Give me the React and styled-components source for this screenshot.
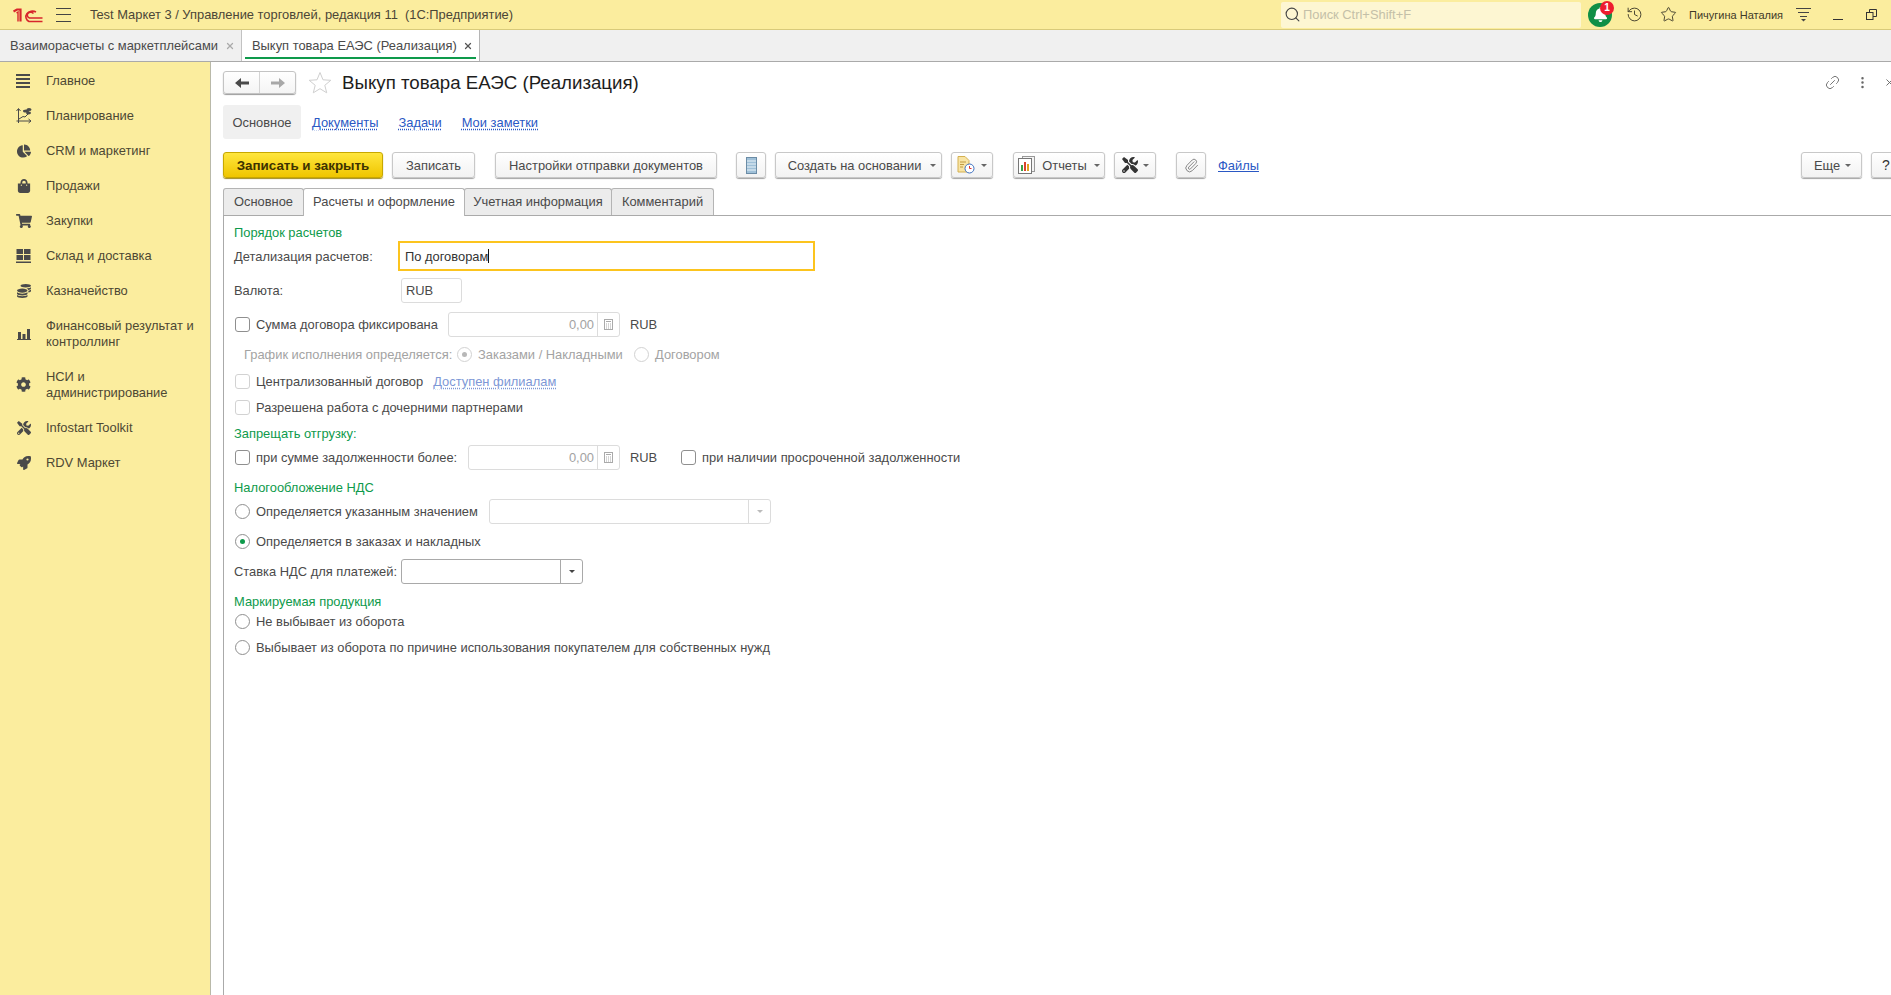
import React from "react";
import styled, { createGlobalStyle } from "styled-components";
import { Search, History, Star, Link2, Paperclip, X, MoreVertical } from "lucide-react";
import { FaChartPie, FaShoppingBag, FaShoppingCart, FaCog, FaTools, FaRocket, FaCoins, FaBell } from "react-icons/fa";

const Global = createGlobalStyle`
  html, body { margin: 0; padding: 0; height: 100%; overflow: hidden; background: #fff; }
  body { font-family: "Liberation Sans", Arial, sans-serif; font-size: 12.9px; color: #4a4a4a; }
  #root { height: 100%; }
`;

const Shell = styled.div`width:1891px;height:995px;display:flex;flex-direction:column;overflow:hidden;`;

/* ---- top bar ---- */
const TopBar = styled.header`height:29px;flex:none;display:flex;align-items:center;background:#fbed9e;border-bottom:1px solid #d8ca7a;`;
const LogoBox = styled.div`margin-left:13px;width:30px;height:16px;display:flex;`;
const Burger = styled.div`margin-left:13px;width:15px;height:12px;border-top:1px solid #444;border-bottom:1px solid #444;position:relative;
  &::after{content:"";position:absolute;left:0;right:0;top:5px;height:1px;background:#444;}`;
const AppTitle = styled.div`margin-left:19px;color:#4b4637;white-space:nowrap;`;
const SearchBox = styled.div`margin-left:auto;width:300px;height:26px;background:#fdf6d2;border-radius:2px;display:flex;align-items:center;padding-left:3px;box-sizing:border-box;color:#c4c0a8;gap:2px;`;
const BellWrap = styled.div`margin-left:7px;width:24px;height:24px;border-radius:50%;background:#0f8f46;display:flex;align-items:center;justify-content:center;position:relative;color:#fff;`;
const Badge = styled.span`position:absolute;top:-2px;right:-2px;width:14px;height:14px;border-radius:50%;background:#ee1c2e;color:#fff;font-size:10px;font-weight:700;display:flex;align-items:center;justify-content:center;`;
const TopIcon = styled.div`margin-left:${p=>p.$ml}px;display:flex;color:#4a4632;`;
const UserName = styled.div`margin-left:12px;width:93px;font-size:11px;color:#3f3a28;white-space:nowrap;`;
const FilterIcon = styled.div`margin-left:14px;display:flex;`;
const Minimize = styled.div`margin-left:22px;width:10px;height:1px;background:#333;align-self:flex-end;margin-bottom:9px;`;
const Restore = styled.div`margin-left:23px;margin-right:14px;display:flex;`;

/* ---- open window tabs ---- */
const WinTabs = styled.nav`height:31px;flex:none;display:flex;background:#f0f0f0;border-bottom:1px solid #aaa;`;
const WinTab = styled.div`
  display:flex;align-items:center;box-sizing:border-box;width:${p=>p.$w}px;height:31px;padding-left:10px;white-space:nowrap;
  background:${p=>p.$active?"#fff":"transparent"};color:#4a4a4a;position:relative;
  border-right:1px solid ${p=>p.$active?"#b5b5b5":"#c2c2c2"};
  ${p=>p.$active&&"&::after{content:'';position:absolute;left:3px;right:3px;bottom:2px;height:2px;background:#0e9a4b;}"}
`;
const WinClose = styled.span`position:absolute;right:${p=>p.$r}px;top:11px;display:flex;color:${p=>p.$dark?"#555":"#aaa"};background:inherit;`;

/* ---- body ---- */
const Body = styled.div`flex:1;display:flex;min-height:0;`;
const Side = styled.aside`width:210px;flex:none;background:#fbed9e;border-right:1px solid #b9b9a9;padding-top:1px;`;
const SideItem = styled.div`height:${p=>p.$two?51:35}px;display:flex;align-items:center;color:#4d4834;line-height:16px;`;
const SideIcon = styled.div`width:46px;flex:none;display:flex;justify-content:center;padding-left:1px;box-sizing:border-box;color:#4a4a4a;`;

const Content = styled.main`flex:1;min-width:0;overflow:hidden;`;
const Inner = styled.div`width:1690px;box-sizing:border-box;padding:9px 0 0 12px;height:100%;display:flex;flex-direction:column;`;

const Head = styled.div`height:23px;display:flex;align-items:center;flex:none;`;
const NavGroup = styled.div`display:flex;width:73px;height:23px;box-sizing:border-box;border:1px solid #c4c4c4;border-radius:3px;background:linear-gradient(#fff,#f4f4f4);box-shadow:0 1px 1px #9c9c9c;`;
const NavBtn = styled.div`flex:1;display:flex;align-items:center;justify-content:center;&+&{border-left:1px solid #d4d4d4;}`;
const StarBox = styled.div`margin-left:12px;display:flex;color:#c8c8c8;`;
const Title = styled.h1`margin:0 0 0 10px;font-size:18.7px;font-weight:400;color:#1d1d1d;white-space:nowrap;`;
const HeadActions = styled.div`margin-left:auto;display:flex;align-items:center;color:#666;margin-right:6px;gap:14px;`;

const SubTabs = styled.div`margin-top:11px;height:34px;flex:none;display:flex;align-items:center;`;
const SubActive = styled.div`width:78px;height:34px;background:#f0f0f0;border-radius:3px;display:flex;align-items:center;justify-content:center;`;
const SubLink = styled.a`margin-left:${p=>p.$ml}px;color:#2a58c4;text-decoration:underline dotted;text-underline-offset:2px;white-space:nowrap;`;

const Toolbar = styled.div`margin-top:13px;height:26px;flex:none;display:flex;align-items:flex-start;`;
const Btn = styled.div`
  height:26px;box-sizing:border-box;width:${p=>p.$w}px;margin-left:${p=>p.$ml||0}px;padding-left:${p=>p.$pl||0}px;flex:none;
  display:flex;align-items:center;justify-content:center;gap:${p=>p.$gap||0}px;white-space:nowrap;color:#4a4a4a;
  border:1px solid #c8c8c8;border-radius:3px;background:linear-gradient(#fff,#f2f2f2);box-shadow:0 1px 1px #a3a3a3;
`;
const PrimaryBtn = styled(Btn)`font-weight:700;font-size:13.4px;color:#3d3200;background:linear-gradient(#ffe63d,#efc500);border-color:#c8a800;box-shadow:0 1px 1px #a08a20;`;
const HelpBtn = styled(Btn)`font-size:14px;color:#333;`;
const Caret = styled.span`width:0;height:0;border-left:3px solid transparent;border-right:3px solid transparent;border-top:3px solid ${p=>p.$c||"#666"};margin-left:${p=>p.$ml||0}px;`;
const FileLink = styled.a`margin-left:12px;align-self:center;color:#2a58c4;text-decoration:underline;white-space:nowrap;`;
const Spacer = styled.div`flex:1;`;

const FormTabs = styled.div`margin-top:10px;height:27px;flex:none;display:flex;align-items:flex-end;position:relative;`;
const FormTab = styled.div`
  width:${p=>p.$w}px;height:${p=>p.$active?28:27}px;box-sizing:border-box;flex:none;display:flex;align-items:center;justify-content:center;white-space:nowrap;
  color:#4a4a4a;background:${p=>p.$active?"#fff":"#ececec"};border:1px solid #b4b4b4;border-radius:3px 3px 0 0;border-bottom:none;padding-bottom:1px;
  ${p=>p.$active&&"margin-bottom:-1px;padding-bottom:3px;z-index:1;"}
  &+&{margin-left:-1px;}
`;
const Panel = styled.section`flex:1;border-left:1px solid #aaa;border-top:1px solid #aaa;padding:9px 0 0 10px;box-sizing:border-box;`;

const Heading = styled.div`height:16px;line-height:16px;margin-top:${p=>p.$mt||0}px;color:#0e9a4b;`;
const Row = styled.div`display:flex;align-items:center;height:${p=>p.$h}px;margin-top:${p=>p.$mt}px;white-space:nowrap;color:#4a4a4a;`;
const Lbl = styled.span`width:${p=>p.$w?p.$w+"px":"auto"};flex:none;margin-left:${p=>p.$ml||0}px;color:${p=>p.$muted?"#a3a3a3":"inherit"};`;
const Focused = styled.div`width:417px;height:30px;box-sizing:border-box;border:2px solid #fcc41e;display:flex;align-items:center;padding-left:5px;margin-left:-1px;color:#333;`;
const Caretline = styled.span`width:1px;height:14px;background:#111;`;
const Field = styled.div`
  box-sizing:border-box;height:25px;width:${p=>p.$w}px;border:1px solid ${p=>p.$dark?"#a9a9a9":"#dcdcdc"};border-radius:3px;display:flex;align-items:center;flex:none;margin-left:${p=>p.$ml||0}px;
  color:${p=>p.$muted?"#a3a3a3":"#4a4a4a"};
`;
const FieldVal = styled.div`flex:1;padding:0 ${p=>p.$right?"3px":"0"} 0 ${p=>p.$right?"0":"4px"};text-align:${p=>p.$right?"right":"left"};`;
const FieldBtn = styled.div`width:21px;height:100%;border-left:1px solid ${p=>p.$dark?"#a9a9a9":"#dcdcdc"};display:flex;align-items:center;justify-content:center;flex:none;`;
const Check = styled.span`width:15px;height:15px;box-sizing:border-box;border:1px solid ${p=>p.$light?"#d2d2d2":"#8f8f8f"};border-radius:3px;flex:none;margin-left:${p=>p.$ml??1}px;margin-right:6px;background:#fff;`;
const Radio = styled.span`width:15px;height:15px;box-sizing:border-box;border:1px solid ${p=>p.$light?"#d2d2d2":"#8f8f8f"};border-radius:50%;flex:none;margin-left:${p=>p.$ml??1}px;margin-right:6px;display:flex;align-items:center;justify-content:center;
  &::after{content:"";width:5px;height:5px;border-radius:50%;background:${p=>p.$dot||"transparent"};}`;
const DimLink = styled.a`margin-left:10px;color:#7d97d6;text-decoration:underline dotted;text-underline-offset:2px;`;

/* ---- drawings ---- */
const Logo = () => (
  <svg width="30" height="16" viewBox="0 0 30 16" fill="none" stroke="#d8262c">
    <path d="M0.500 4.500 L4 2.500 H7.500 V14.500" strokeWidth="2.200" />
    <path d="M3.500 6 L5 5 V14.500" strokeWidth="1.400" />
    <path d="M23 5 A6.500 5.500 0 1 0 16 14.500 H29.500" strokeWidth="1.600" />
    <path d="M20.500 6.500 A3.400 3 0 1 0 16.500 11 H29.500" strokeWidth="1.600" />
  </svg>
);
const LinesIcon = () => (
  <svg width="15" height="14" viewBox="0 0 15 14" fill="#4a4a4a"><rect y="0" width="14" height="2"/><rect y="4" width="14" height="2"/><rect y="8" width="14" height="2"/><rect y="12" width="14" height="2"/></svg>
);
const PlanIcon = () => (
  <svg width="16" height="17" viewBox="0 0 16 17" fill="none" stroke="#4a4a4a">
    <path d="M2.500 16V2M0.500 4L2.500 1.500 4.500 4M0.500 14H15M12.500 12L15 14 12.500 16" strokeWidth="1"/>
    <path d="M3 12L7 9.500 9 10 12 7" strokeWidth="1"/>
    <ellipse cx="10" cy="4" rx="3" ry="1.500" fill="#4a4a4a" stroke="none"/><ellipse cx="13" cy="2.500" rx="2.500" ry="1.500" fill="#4a4a4a" stroke="none"/><ellipse cx="12.500" cy="6" rx="2.500" ry="1.400" fill="#4a4a4a" stroke="none"/>
  </svg>
);
const GridIcon = () => (
  <svg width="15" height="14" viewBox="0 0 15 14" fill="#4a4a4a"><rect x="0.500" width="6.500" height="5"/><rect x="8" width="6.500" height="5"/><rect x="0.500" y="6" width="6.500" height="5"/><rect x="8" y="6" width="6.500" height="5"/><rect y="12.500" width="15" height="1.500"/></svg>
);
const BarsIcon = () => (
  <svg width="14" height="12" viewBox="0 0 14 12" fill="#4a4a4a"><rect x="1" y="4" width="3" height="7"/><rect x="5.500" y="6" width="3" height="5"/><rect x="10" y="1" width="3" height="10"/><rect y="11" width="14" height="1"/></svg>
);
const FilterGlyph = () => (
  <svg width="15" height="14" viewBox="0 0 15 14" fill="#444"><rect width="15" height="1"/><rect x="2" y="4" width="11" height="1"/><rect x="4" y="8" width="7" height="1"/><path d="M5 11H10L7.500 13.500Z"/></svg>
);
const RestoreGlyph = () => (
  <svg width="11" height="11" viewBox="0 0 11 11" fill="none" stroke="#333"><rect x="0.500" y="3.500" width="6.500" height="7"/><path d="M3.500 3.500V0.500H10.500V7.500H7"/></svg>
);
const ArrowFlip = styled.svg`transform:${p=>p.$flip?"scaleX(-1)":"none"};`;
const BackArrow = ({ c, flip }) => (
  <ArrowFlip $flip={flip} width="14" height="10" viewBox="0 0 14 10" fill={c}><path d="M0 5L6 0V3.500H14V6.500H6V10Z"/></ArrowFlip>
);
const OutlineStar = () => (
  <svg width="24" height="23" viewBox="0 0 24 23" fill="none" stroke="#cfcfcf"><path d="M12 1.500L15 8.800 22.800 9.300 16.800 14.300 18.700 21.800 12 17.700 5.300 21.800 7.200 14.300 1.200 9.300 9 8.800Z"/></svg>
);
const LedgerIcon = () => (
  <svg width="11" height="17" viewBox="0 0 11 17"><rect x="0.500" y="0.500" width="10" height="16" fill="#9fc0d8" stroke="#6b8ca6"/><path d="M1 4H10M1 7H10M1 10H10M1 13H10" stroke="#eaf3f8"/></svg>
);
const DocClockIcon = () => (
  <svg width="18" height="18" viewBox="0 0 18 18"><path d="M1 .5H8L12 4.500V16H1Z" fill="#f8e4a4" stroke="#d4b050"/><path d="M3 6H9M3 8.500H7M3 11H6" stroke="#c09a40"/><circle cx="12.500" cy="12.500" r="4.500" fill="#fff" stroke="#3c6fc0"/><path d="M12.500 10V12.500H14.500" stroke="#d33" fill="none"/></svg>
);
const ReportIcon = () => (
  <svg width="17" height="18" viewBox="0 0 17 18"><rect x="4.500" y="0.500" width="12" height="15" fill="#f4f4f4" stroke="#999"/><rect x="0.500" y="2.500" width="13" height="15" fill="#fff" stroke="#777"/><rect x="3" y="9" width="2" height="6" fill="#3aa047"/><rect x="6" y="6" width="2" height="9" fill="#d9432e"/><rect x="9" y="8" width="2" height="7" fill="#e0a020"/></svg>
);
const CalcIcon = ({ c }) => (
  <svg width="9" height="11" viewBox="0 0 9 11" fill="none" stroke={c}><rect x="0.500" y="0.500" width="8" height="10"/><path d="M2 2.500H7M2 5H3M4 5H5M6 5H7M2 7H3M4 7H5M6 7H7M2 9H3M4 9H5M6 9H7"/></svg>
);
const LinkIcon = styled(Link2)`transform:rotate(-45deg);`;

const sideItems = [
  { t: "Главное", i: <LinesIcon /> },
  { t: "Планирование", i: <PlanIcon /> },
  { t: "CRM и маркетинг", i: <FaChartPie size={14} /> },
  { t: "Продажи", i: <FaShoppingBag size={14} /> },
  { t: "Закупки", i: <FaShoppingCart size={16} /> },
  { t: "Склад и доставка", i: <GridIcon /> },
  { t: "Казначейство", i: <FaCoins size={14} /> },
  { t: <>Финансовый результат и<br />контроллинг</>, i: <BarsIcon />, two: true },
  { t: <>НСИ и<br />администрирование</>, i: <FaCog size={15} />, two: true },
  { t: "Infostart Toolkit", i: <FaTools size={14} /> },
  { t: "RDV Маркет", i: <FaRocket size={14} /> },
];

export default function App() {
  return (
    <Shell>
      <Global />
      <TopBar>
        <LogoBox><Logo /></LogoBox>
        <Burger />
        <AppTitle>Test Маркет 3 / Управление торговлей, редакция 11&nbsp; (1С:Предприятие)</AppTitle>
        <SearchBox><Search size={17} color="#444" strokeWidth={1.6} />Поиск Ctrl+Shift+F</SearchBox>
        <BellWrap><FaBell size={15} /><Badge>1</Badge></BellWrap>
        <TopIcon $ml={14}><History size={17} strokeWidth={1.4} /></TopIcon>
        <TopIcon $ml={17}><Star size={17} strokeWidth={1.4} /></TopIcon>
        <UserName>Пичугина Наталия</UserName>
        <FilterIcon><FilterGlyph /></FilterIcon>
        <Minimize />
        <Restore><RestoreGlyph /></Restore>
      </TopBar>
      <WinTabs>
        <WinTab $w={242}>Взаиморасчеты с маркетплейсами<WinClose $r={6}><X size={10} strokeWidth={3} /></WinClose></WinTab>
        <WinTab $w={238} $active>Выкуп товара ЕАЭС (Реализация)<WinClose $r={6} $dark><X size={10} strokeWidth={3} /></WinClose></WinTab>
      </WinTabs>
      <Body>
        <Side>
          {sideItems.map((s, n) => (
            <SideItem key={n} $two={s.two}><SideIcon>{s.i}</SideIcon><span>{s.t}</span></SideItem>
          ))}
        </Side>
        <Content>
          <Inner>
            <Head>
              <NavGroup>
                <NavBtn><BackArrow c="#4a4a4a" /></NavBtn>
                <NavBtn><BackArrow c="#a8a8a8" flip /></NavBtn>
              </NavGroup>
              <StarBox><OutlineStar /></StarBox>
              <Title>Выкуп товара ЕАЭС (Реализация)</Title>
              <HeadActions>
                <LinkIcon size={17} strokeWidth={1.2} />
                <MoreVertical size={15} strokeWidth={2} />
                <X size={11} />
              </HeadActions>
            </Head>
            <SubTabs>
              <SubActive>Основное</SubActive>
              <SubLink $ml={11}>Документы</SubLink>
              <SubLink $ml={20}>Задачи</SubLink>
              <SubLink $ml={20}>Мои заметки</SubLink>
            </SubTabs>
            <Toolbar>
              <PrimaryBtn $w={160}>Записать и закрыть</PrimaryBtn>
              <Btn $w={83} $ml={9}>Записать</Btn>
              <Btn $w={222} $ml={20}>Настройки отправки документов</Btn>
              <Btn $w={30} $ml={19}><LedgerIcon /></Btn>
              <Btn $w={167} $ml={9} $pl={7}>Создать на основании<Caret $ml={9} /></Btn>
              <Btn $w={42} $ml={9} $gap={6}><DocClockIcon /><Caret /></Btn>
              <Btn $w={92} $ml={20} $gap={7}><ReportIcon />Отчеты<Caret /></Btn>
              <Btn $w={42} $ml={9} $gap={5}><FaTools size={16} color="#333" /><Caret /></Btn>
              <Btn $w={30} $ml={20}><Paperclip size={15} strokeWidth={1.4} color="#777" /></Btn>
              <FileLink>Файлы</FileLink>
              <Spacer />
              <Btn $w={61} $gap={5} $pl={2}>Еще<Caret /></Btn>
              <HelpBtn $w={30} $ml={9}>?</HelpBtn>
            </Toolbar>
            <FormTabs>
              <FormTab $w={81}>Основное</FormTab>
              <FormTab $w={162} $active>Расчеты и оформление</FormTab>
              <FormTab $w={148}>Учетная информация</FormTab>
              <FormTab $w={103}>Комментарий</FormTab>
            </FormTabs>
            <Panel>
              <Heading>Порядок расчетов</Heading>
              <Row $h={30} $mt={0}>
                <Lbl $w={165}>Детализация расчетов:</Lbl>
                <Focused>По договорам<Caretline /></Focused>
              </Row>
              <Row $h={25} $mt={7}>
                <Lbl $w={167}>Валюта:</Lbl>
                <Field $w={61}><FieldVal>RUB</FieldVal></Field>
              </Row>
              <Row $h={25} $mt={9}>
                <Check />
                <Lbl $w={192}>Сумма договора фиксирована</Lbl>
                <Field $w={172} $muted><FieldVal $right>0,00</FieldVal><FieldBtn><CalcIcon c="#aaa" /></FieldBtn></Field>
                <Lbl $ml={10}>RUB</Lbl>
              </Row>
              <Row $h={20} $mt={7}>
                <Lbl $ml={10} $w={213} $muted>График исполнения определяется:</Lbl>
                <Radio $light $dot="#b8b8b8" $ml={0} />
                <Lbl $w={156} $muted>Заказами / Накладными</Lbl>
                <Radio $light $ml={0} />
                <Lbl $muted>Договором</Lbl>
              </Row>
              <Row $h={20} $mt={7}>
                <Check $light />
                <Lbl>Централизованный договор</Lbl>
                <DimLink>Доступен филиалам</DimLink>
              </Row>
              <Row $h={20} $mt={6}>
                <Check $light />
                <Lbl>Разрешена работа с дочерними партнерами</Lbl>
              </Row>
              <Heading $mt={9}>Запрещать отгрузку:</Heading>
              <Row $h={25} $mt={3}>
                <Check />
                <Lbl $w={212}>при сумме задолженности более:</Lbl>
                <Field $w={152} $muted><FieldVal $right>0,00</FieldVal><FieldBtn><CalcIcon c="#aaa" /></FieldBtn></Field>
                <Lbl $w={51} $ml={10}>RUB</Lbl>
                <Check $ml={0} />
                <Lbl>при наличии просроченной задолженности</Lbl>
              </Row>
              <Heading $mt={10}>Налогообложение НДС</Heading>
              <Row $h={25} $mt={3}>
                <Radio />
                <Lbl $w={233}>Определяется указанным значением</Lbl>
                <Field $w={282}><FieldVal /><FieldBtn><Caret $c="#bbb" /></FieldBtn></Field>
              </Row>
              <Row $h={20} $mt={7}>
                <Radio $dot="#0e9a4b" />
                <Lbl>Определяется в заказах и накладных</Lbl>
              </Row>
              <Row $h={25} $mt={8}>
                <Lbl $w={167}>Ставка НДС для платежей:</Lbl>
                <Field $w={182} $dark><FieldVal /><FieldBtn $dark><Caret $c="#444" /></FieldBtn></Field>
              </Row>
              <Heading $mt={10}>Маркируемая продукция</Heading>
              <Row $h={20} $mt={1}>
                <Radio />
                <Lbl>Не выбывает из оборота</Lbl>
              </Row>
              <Row $h={20} $mt={6}>
                <Radio />
                <Lbl>Выбывает из оборота по причине использования покупателем для собственных нужд</Lbl>
              </Row>
            </Panel>
          </Inner>
        </Content>
      </Body>
    </Shell>
  );
}
